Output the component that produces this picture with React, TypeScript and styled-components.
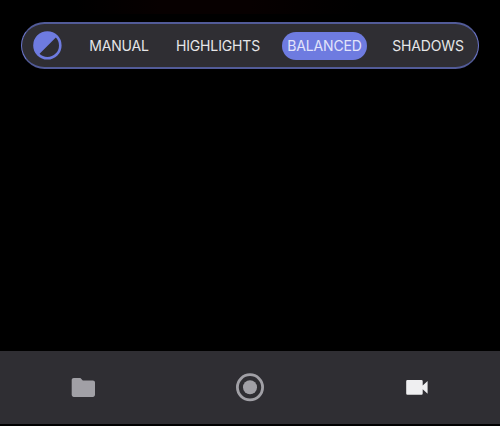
import React from "react";
import styled, { createGlobalStyle } from "styled-components";

const GlobalStyle = createGlobalStyle`
  * { box-sizing: border-box; }
  body { margin: 0; background: #000; }
`;

const Screen = styled.main`
  display: flex;
  flex-direction: column;
  justify-content: space-between;
  width: 500px;
  height: 426px;
  padding: 22px 0 2px;
  overflow: hidden;
  background: linear-gradient(90deg, #000 15%, #070000 32%, #070000 50%, #000 72%) top / 100% 14px no-repeat #000;
  font-family: Inter, "Liberation Sans", sans-serif;
`;

const ModeBar = styled.nav`
  display: flex;
  align-items: center;
  height: 47px;
  margin: 0 21px;
  padding-left: 11px;
  border: solid;
  border-width: 2px 1px;
  border-color: #525b98 #6a75c8;
  border-radius: 24px;
  background: #2f2e33;
`;

const ContrastIcon = styled.svg`
  display: block;
  flex: none;
  width: 29px;
  height: 29px;
  margin-right: 23px;
`;

const Mode = styled.button<{ $width: number; $gap?: number; $active?: boolean }>`
  display: flex;
  align-items: center;
  justify-content: center;
  flex: none;
  width: ${(p) => p.$width}px;
  height: 28px;
  margin: 0 ${(p) => p.$gap ?? 0}px 0 0;
  padding: 0;
  border: 0;
  border-radius: 14px;
  background: ${(p) => (p.$active ? "#6e7be0" : "transparent")};
  color: ${(p) => (p.$active ? "#e2e4fa" : "#e6e6e8")};
  font: 430 14px/28px Inter, "Liberation Sans", sans-serif;
  letter-spacing: -0.14px;
  white-space: nowrap;
`;

const TabBar = styled.footer`
  display: grid;
  grid-template-columns: repeat(3, 1fr);
  align-items: center;
  height: 73px;
  background: #2f2e33;
`;

const Tab = styled.button<{ $active?: boolean }>`
  display: flex;
  align-items: center;
  justify-content: center;
  height: 73px;
  padding: 0 0 1px;
  border: 0;
  background: none;
  color: ${(p) => (p.$active ? "#efeff1" : "#a1a0a6")};
`;

const TabIcon = styled.svg`
  display: block;
  width: 30px;
  height: 30px;
  fill: currentColor;
`;

export default function App() {
  return (
    <>
      <GlobalStyle />
      <Screen>
        <ModeBar>
          <ContrastIcon viewBox="0 0 29 29">
            <circle cx="14.4" cy="14.4" r="12.9" fill="none" stroke="#6e7be0" strokeWidth="2.6" />
            <path d="M5.6 23.8A12.88 12.88 0 1 1 23.8 5.6Z" fill="#6e7be0" />
          </ContrastIcon>
          <Mode $width={68} $gap={19}>MANUAL</Mode>
          <Mode $width={92} $gap={18}>HIGHLIGHTS</Mode>
          <Mode $width={85} $gap={21} $active>BALANCED</Mode>
          <Mode $width={80}>SHADOWS</Mode>
        </ModeBar>
        <TabBar>
          <Tab aria-label="Files">
            <TabIcon viewBox="0 0 30 30">
              <path d="M5.8 6h6.6l2.4 2.4h10.1c1.2 0 2.1.9 2.1 2.1v12.3c0 1.2-.9 2.1-2.1 2.1H5.8c-1.2 0-2.1-.9-2.1-2.1V8.1c0-1.2.9-2.1 2.1-2.1Z" />
            </TabIcon>
          </Tab>
          <Tab aria-label="Record">
            <TabIcon viewBox="0 0 30 30">
              <circle cx="15" cy="15.3" r="12.6" fill="none" stroke="currentColor" strokeWidth="2.8" />
              <circle cx="15" cy="15.3" r="7" />
            </TabIcon>
          </Tab>
          <Tab aria-label="Video" $active>
            <TabIcon viewBox="0 0 30 30">
              <path d="M5.4 8.1H19.5q1.2 0 1.2 1.2v4.1L25.6 9V21.8L20.7 17.2V21.6q0 1.2-1.2 1.2H5.4q-1.2 0-1.2-1.2V9.3Q4.2 8.1 5.4 8.1Z" />
            </TabIcon>
          </Tab>
        </TabBar>
      </Screen>
    </>
  );
}
